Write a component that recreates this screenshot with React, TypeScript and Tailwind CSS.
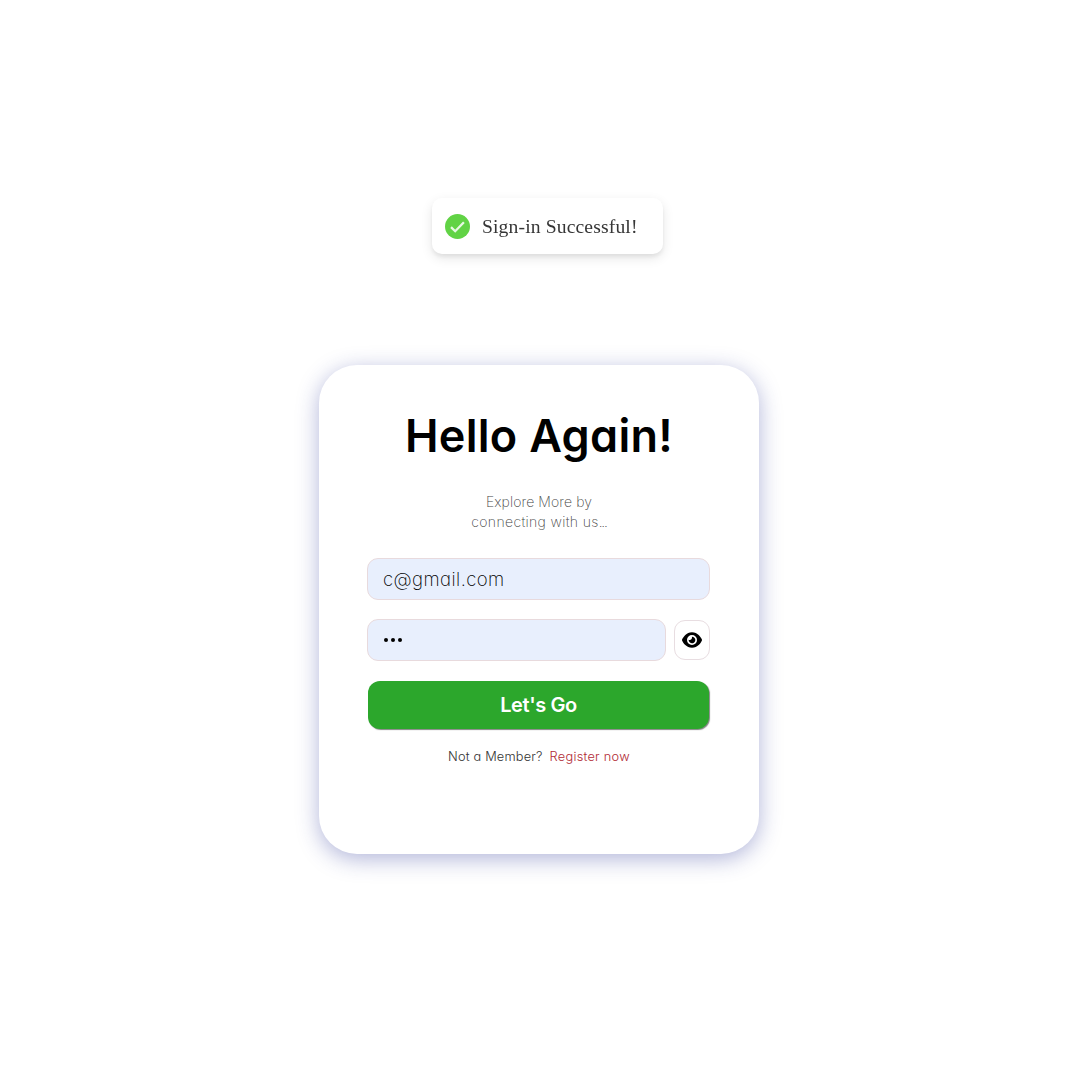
import { FaEye } from "react-icons/fa6";

function Toast() {
  return (
    <div className="fixed left-[432px] top-[198px] flex h-14 w-[231px] items-center rounded-[10px] bg-white pl-[13px] shadow-[0_4px_12px_rgba(0,0,0,0.1),0_3px_4px_rgba(0,0,0,0.06)]">
      <svg width="25" height="25" viewBox="0 0 25 25" className="shrink-0">
        <circle cx="12.5" cy="12.5" r="12.5" fill="#61d345" />
        <path d="M6 13.1 L10.2 17.2 L18.9 8.2" fill="none" stroke="#fff" strokeOpacity="0.85" strokeWidth="2.3" />
      </svg>
      <span className="ml-3 mt-px whitespace-nowrap font-['Liberation_Serif',serif] text-[19.6px] tracking-[0.14px] text-[#363636]">
        Sign-in Successful!
      </span>
    </div>
  );
}

export default function App() {
  return (
    <main className="min-h-screen bg-white pt-[365px] font-['Inter',sans-serif] [font-feature-settings:'cv11']">
      <Toast />
      <section className="ml-[319px] flex h-[489px] w-[440px] flex-col items-center rounded-[38px] bg-white px-12 pt-[38px] shadow-[0_5px_22px_rgba(40,50,150,0.36)]">
        <h1 className="h-[66px] whitespace-nowrap text-[45px] font-semibold leading-[66px] tracking-[0.3px] text-black">
          Hello Again!
        </h1>
        <p className="mt-[23px] text-center text-[14px] font-extralight leading-5 tracking-[0.1px] text-[#444]">
          Explore More by
          <br />
          <span className="tracking-[0.35px]">connecting with us</span>
          <span className="tracking-[-1.2px]">...</span>
        </p>
        <form className="mr-px mt-[26px] w-[343px]" onSubmit={(e) => e.preventDefault()}>
          <div className="flex h-[42px] items-center rounded-[11px] border border-[#e8dadd] bg-[#e8effd] pl-[15px] pt-px text-[18.6px] font-extralight tracking-[0.4px] text-black">
            c@gmail.com
          </div>
          <div className="mt-[19px] flex items-center justify-between">
            <div className="flex h-[42px] w-[299px] items-center gap-[3px] rounded-[11px] border border-[#e8dadd] bg-[#e8effd] pl-4">
              <i className="size-1 rounded-full bg-black" />
              <i className="size-1 rounded-full bg-black" />
              <i className="size-1 rounded-full bg-black" />
            </div>
            <button type="button" aria-label="Show password" className="flex h-10 w-9 items-center justify-center rounded-[11px] border border-[#e8dde1] bg-white">
              <FaEye size={20} />
            </button>
          </div>
          <button className="ml-px mt-5 flex h-12 w-[341px] items-center justify-center rounded-[12px] bg-[#2ca72c] text-[20px] font-semibold tracking-[-0.4px] text-white shadow-[1px_1px_1px_rgba(50,50,50,0.6)]">
            Let's Go
          </button>
        </form>
        <p className="mt-[18px] flex gap-[7px] whitespace-nowrap text-[12.8px] font-light leading-5">
          <span className="tracking-[0.17px] text-[#333]">Not a Member?</span>
          <a className="tracking-[0.25px] text-[#b12a34]">Register now</a>
        </p>
      </section>
    </main>
  );
}
